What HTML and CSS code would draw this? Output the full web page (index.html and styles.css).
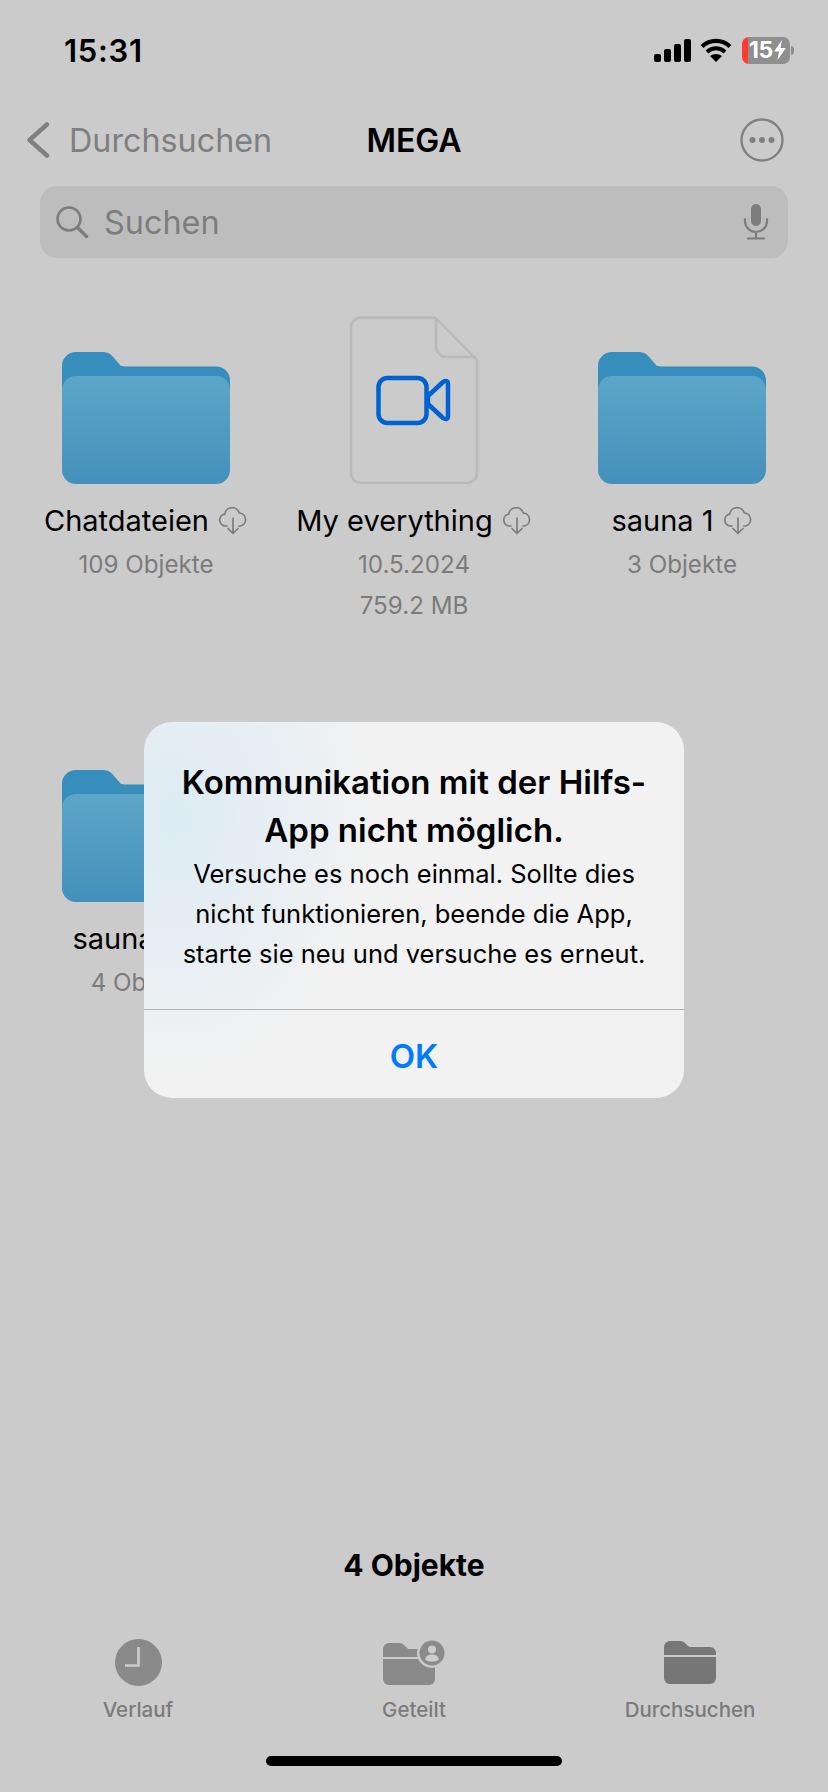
FILE: index.html
```html
<!DOCTYPE html>
<html lang="de">
<head>
    <meta charset="UTF-8">
    <meta name="viewport" content="width=device-width, initial-scale=1.0">
    <title>MEGA</title>
    <link rel="stylesheet" href="styles.css">
</head>
<body>
    <svg class="defs" width="0" height="0">
        <defs>
            <linearGradient id="folderFront" x1="0" y1="0" x2="0" y2="1">
                <stop offset="0" stop-color="#5ca6c8"/>
                <stop offset="1" stop-color="#4390bb"/>
            </linearGradient>
            <symbol id="folder" viewBox="0 0 168 132">
                <path d="M0 14a14 14 0 0 1 14-14h26c6 0 9 2 12 6l7 8c2 0 3 .5 5 .5h90a14 14 0 0 1 14 14v50H0z" fill="#378dbb"/>
                <path d="M0 38a14 14 0 0 1 14-14h140a14 14 0 0 1 14 14v80a14 14 0 0 1-14 14H14a14 14 0 0 1-14-14z" fill="url(#folderFront)"/>
            </symbol>
            <symbol id="cloud" viewBox="0 0 30 28">
                <path d="M9 19H7.500a6 6 0 0 1-.8-11.900A7.500 7.500 0 0 1 21.300 6a6.600 6.600 0 0 1 1.200 13H21" fill="none" stroke="#7d7d7d" stroke-width="1.700" stroke-linecap="round"/>
                <path d="M15 11v15M10 21.500l5 5 5-5" fill="none" stroke="#7d7d7d" stroke-width="1.700" stroke-linecap="round" stroke-linejoin="round"/>
            </symbol>
        </defs>
    </svg>

    <div class="status-bar">
        <span class="time">15:31</span>
        <div class="status-icons">
            <svg class="signal" width="37" height="23" viewBox="0 0 37 23" fill="#000">
                <rect x="0" y="15" width="7" height="8" rx="2"/>
                <rect x="10" y="10" width="7" height="13" rx="2"/>
                <rect x="20" y="5" width="7" height="18" rx="2"/>
                <rect x="30" y="0" width="7" height="23" rx="2"/>
            </svg>
            <svg class="wifi" width="32" height="24" viewBox="0 0 32 24">
                <path d="M2 8.500C10 1 22 1 30 8.500M7 14c5.500-4.800 12.500-4.800 18 0" fill="none" stroke="#000" stroke-width="4.200"/>
                <path d="M16 24l-6-6c3.500-2.800 8.500-2.800 12 0z" fill="#000"/>
            </svg>
            <div class="battery">
                <span class="battery-text">15</span>
                <svg width="12" height="20" viewBox="0 0 12 20"><path d="M8 0L0 11.500h5L3.500 20 12 8H6.500z" fill="#fff"/></svg>
            </div>
            <span class="battery-tip"></span>
        </div>
    </div>

    <div class="nav-bar">
        <div class="nav-back">
            <svg width="24" height="36" viewBox="0 0 24 36"><path d="M21 2.500L3.500 18 21 33.500" fill="none" stroke="#808080" stroke-width="4.500" stroke-linecap="round" stroke-linejoin="round"/></svg>
            <span>Durchsuchen</span>
        </div>
        <div class="nav-title">MEGA</div>
        <svg class="nav-more" width="44" height="44" viewBox="0 0 44 44" fill="#808080">
            <circle cx="22" cy="22" r="20.500" fill="none" stroke="#808080" stroke-width="2.400"/>
            <circle cx="12.500" cy="22" r="3"/>
            <circle cx="22" cy="22" r="3"/>
            <circle cx="31.500" cy="22" r="3"/>
        </svg>
    </div>

    <div class="search-bar">
        <svg width="34" height="34" viewBox="0 0 34 34"><circle cx="14" cy="14" r="11.500" fill="none" stroke="#7d7d7d" stroke-width="2.600"/><path d="M22.500 22.500l9 9" stroke="#7d7d7d" stroke-width="3.400" stroke-linecap="round"/></svg>
        <span class="search-text">Suchen</span>
        <svg class="mic" width="26" height="36" viewBox="0 0 26 36">
            <rect x="8" y="0" width="10" height="22" rx="5" fill="#7d7d7d"/>
            <path d="M2 15v2a11 11 0 0 0 22 0v-2M13 28v6M5 34.500h16" fill="none" stroke="#7d7d7d" stroke-width="2.200" stroke-linecap="round"/>
        </svg>
    </div>

    <div class="file-grid">
        <div class="file-item">
            <div class="file-icon"><svg width="168" height="132"><use href="#folder"/></svg></div>
            <div class="file-name">Chatdateien <svg class="cloud" width="30" height="28"><use href="#cloud"/></svg></div>
            <div class="file-meta">109 Objekte</div>
        </div>
        <div class="file-item">
            <div class="file-icon">
                <svg width="130" height="168" viewBox="0 0 130 168">
                    <path d="M12 1.500h74L128 44v113a10 10 0 0 1-10 10H12a10 10 0 0 1-10-10V11.500a10 10 0 0 1 10-10z" fill="none" stroke="#b9b9b9" stroke-width="2.400"/>
                    <path d="M87 2v28a11 11 0 0 0 11 11h29" fill="none" stroke="#b9b9b9" stroke-width="2.400"/>
                    <rect x="29.500" y="62" width="48" height="45" rx="9" fill="none" stroke="#0062d0" stroke-width="4.500"/>
                    <path d="M79 80l15-14c3-2 5-1 5 2v32c0 3-2 4-5 2L79 88z" fill="none" stroke="#0062d0" stroke-width="4.500" stroke-linejoin="round"/>
                </svg>
            </div>
            <div class="file-name">My everything <svg class="cloud" width="30" height="28"><use href="#cloud"/></svg></div>
            <div class="file-meta">10.5.2024</div>
            <div class="file-meta">759.2 MB</div>
        </div>
        <div class="file-item">
            <div class="file-icon"><svg width="168" height="132"><use href="#folder"/></svg></div>
            <div class="file-name">sauna 1 <svg class="cloud" width="30" height="28"><use href="#cloud"/></svg></div>
            <div class="file-meta">3 Objekte</div>
        </div>
        <div class="file-item">
            <div class="file-icon"><svg width="168" height="132"><use href="#folder"/></svg></div>
            <div class="file-name">sauna 2 <svg class="cloud" width="30" height="28"><use href="#cloud"/></svg></div>
            <div class="file-meta">4 Objekte</div>
        </div>
    </div>

    <div class="item-count">4 Objekte</div>

    <div class="tab-bar">
        <div class="tab">
            <div class="tab-icon">
                <svg width="47" height="47" viewBox="0 0 47 47">
                    <circle cx="23.500" cy="23.500" r="23.500" fill="#8a8a8a"/>
                    <path d="M23.500 8v18.500H10" fill="none" stroke="#cbcbcb" stroke-width="2.600"/>
                </svg>
            </div>
            <span>Verlauf</span>
        </div>
        <div class="tab">
            <div class="tab-icon">
                <svg width="62" height="45" viewBox="0 0 62 45">
                    <path d="M0 9a6 6 0 0 1 6-6h10c3 0 4 1 6 3l2 2c1 1 2 1 3 1h19a6 6 0 0 1 6 6v2H0z" fill="#8a8a8a"/>
                    <path d="M0 19h52v20a6 6 0 0 1-6 6H6a6 6 0 0 1-6-6z" fill="#8a8a8a"/>
                    <circle cx="49" cy="13" r="15" fill="#cbcbcb"/>
                    <circle cx="49" cy="13" r="12.500" fill="#8a8a8a"/>
                    <circle cx="49" cy="9.500" r="4" fill="#cbcbcb"/>
                    <path d="M42 19.500c1-4 3.500-5 7-5s6 1 7 5c-4 3-10 3-14 0z" fill="#cbcbcb"/>
                </svg>
            </div>
            <span>Geteilt</span>
        </div>
        <div class="tab">
            <div class="tab-icon">
                <svg width="52" height="43" viewBox="0 0 52 43">
                    <path d="M0 6a6 6 0 0 1 6-6h10c3 0 4 1 6 3l2 2c1 1 2 1 3 1h19a6 6 0 0 1 6 6v2H0z" fill="#777"/>
                    <path d="M0 16h52v21a6 6 0 0 1-6 6H6a6 6 0 0 1-6-6z" fill="#777"/>
                </svg>
            </div>
            <span>Durchsuchen</span>
        </div>
    </div>

    <div class="home-bar"><span class="home-indicator"></span></div>

    <div class="alert">
        <div class="alert-body">
            <div class="alert-title">Kommunikation mit der Hilfs-<br>App nicht möglich.</div>
            <div class="alert-text">Versuche es noch einmal. Sollte dies<br>nicht funktionieren, beende die App,<br>starte sie neu und versuche es erneut.</div>
        </div>
        <div class="alert-button">OK</div>
    </div>
</body>
</html>
```

FILE: styles.css
```css
* {
    box-sizing: border-box;
}

html, body {
    margin: 0;
    padding: 0;
}

body {
    position: relative;
    width: 828px;
    height: 1792px;
    overflow: hidden;
    display: flex;
    flex-direction: column;
    background-color: #cbcbcb;
    font-family: Inter, "Liberation Sans", sans-serif;
    color: #000;
}

.defs {
    position: absolute;
}

svg {
    display: block;
    flex-shrink: 0;
}

/* status bar */
.status-bar {
    height: 100px;
    padding: 0 34px 0 64px;
    display: flex;
    align-items: center;
    justify-content: space-between;
}

.time {
    font-size: 31px;
    font-weight: 600;
    letter-spacing: 0.7px;
}

.status-icons {
    display: flex;
    align-items: center;
}

.signal {
    margin-right: 9px;
}

.wifi {
    margin-right: 10px;
}

.battery {
    width: 48px;
    height: 27px;
    padding-left: 7px;
    display: flex;
    align-items: center;
    gap: 1px;
    border-radius: 7px;
    background: linear-gradient(90deg, #ff3b30 6px, #8e8e8e 6px);
}

.battery-text {
    color: #fff;
    font-size: 23px;
    font-weight: 700;
    letter-spacing: -0.5px;
}

.battery-tip {
    width: 3px;
    height: 9px;
    margin-left: 1px;
    border-radius: 0 3px 3px 0;
    background-color: #8e8e8e;
}

/* nav */
.nav-bar {
    position: relative;
    height: 80px;
    padding: 0 44px 0 26px;
    display: flex;
    align-items: center;
    justify-content: space-between;
}

.nav-back {
    display: flex;
    align-items: center;
    gap: 19px;
    font-size: 32.300px;
    color: #7f7f7f;
}

.nav-title {
    position: absolute;
    left: 0;
    right: 0;
    text-align: center;
    font-size: 32px;
    font-weight: 600;
}

.search-bar {
    height: 72px;
    margin: 6px 40px 0;
    padding: 0 19px 0 15px;
    display: flex;
    align-items: center;
    gap: 15px;
    border-radius: 17px;
    background-color: #bdbdbd;
}

.search-text {
    flex: 1;
    font-size: 32.400px;
    color: #7d7d7d;
}

/* files */
.file-grid {
    margin-top: 58px;
    padding: 0 12px;
    display: grid;
    grid-template-columns: repeat(3, 268px);
    grid-auto-rows: 418px;
}

.file-item {
    display: flex;
    flex-direction: column;
    align-items: center;
}

.file-icon {
    height: 168px;
    display: flex;
    align-items: flex-end;
}

.file-name {
    margin-top: 16px;
    height: 40px;
    display: flex;
    align-items: center;
    gap: 9px;
    font-size: 29px;
    white-space: nowrap;
}

.cloud {
    margin-top: 2px;
}

.file-meta {
    height: 40px;
    margin-top: 1px;
    display: flex;
    align-items: center;
    font-size: 24.200px;
    color: #7b7b7b;
}

.file-name + .file-meta {
    margin-top: 4px;
}

/* bottom */
.item-count {
    margin-top: auto;
    height: 40px;
    line-height: 40px;
    text-align: center;
    font-size: 30px;
    font-weight: 700;
}

.tab-bar {
    margin-top: 54px;
    height: 96px;
    display: grid;
    grid-template-columns: repeat(3, 1fr);
}

.tab {
    display: flex;
    flex-direction: column;
    align-items: center;
    gap: 11px;
    font-size: 20.500px;
    line-height: 25px;
    font-weight: 500;
    color: #7b7b7b;
}

.tab-icon {
    height: 47px;
    display: flex;
    align-items: center;
}

.home-bar {
    height: 57px;
    padding-top: 21px;
    display: flex;
    justify-content: center;
}

.home-indicator {
    width: 296px;
    height: 10px;
    border-radius: 5px;
    background-color: #000;
}

/* alert */
.alert {
    position: absolute;
    left: 144px;
    top: 722px;
    width: 540px;
    height: 376px;
    display: flex;
    flex-direction: column;
    border-radius: 28px;
    overflow: hidden;
    background: radial-gradient(ellipse 200px 260px at 30px 95px, #dcebf4, #f2f2f2);
}

.alert-body {
    height: 288px;
    padding-top: 36px;
    border-bottom: 1px solid #b3b3b3;
    text-align: center;
}

.alert-title {
    font-size: 33px;
    line-height: 48px;
    font-weight: 600;
}

.alert-text {
    font-size: 25.500px;
    line-height: 40px;
}

.alert-button {
    flex: 1;
    padding-top: 3px;
    display: flex;
    align-items: center;
    justify-content: center;
    font-size: 33px;
    font-weight: 600;
    color: #007aff;
}
```
